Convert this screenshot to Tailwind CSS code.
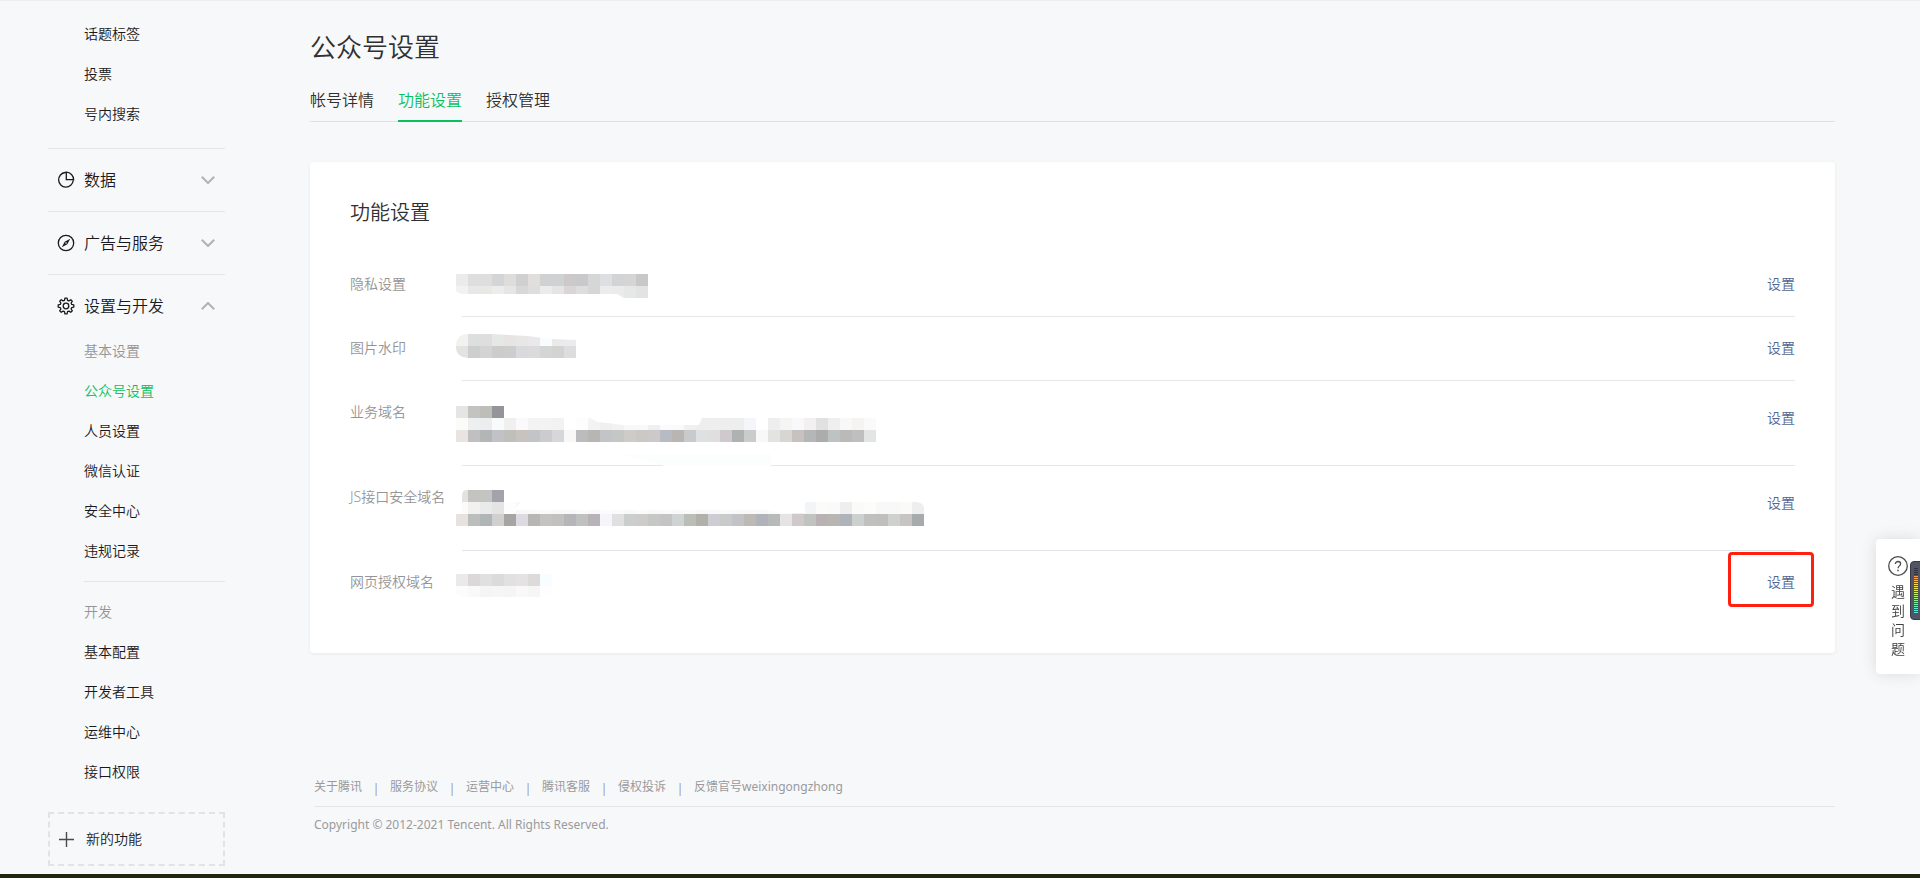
<!DOCTYPE html>
<html lang="zh-CN">
<head>
  <meta charset="UTF-8" />
  <meta name="viewport" content="width=device-width, initial-scale=1.0" />
  <title>公众号设置</title>
  <script src="https://cdn.jsdelivr.net/npm/@tailwindcss/browser@4"></script>
</head>
<body class="bg-[#f7f8fa] font-['Noto_Sans','Noto_Sans_CJK_SC',sans-serif] font-[350] text-sm text-[#1a1a1c]">
  <div class="min-h-screen flex flex-col border-t border-[#eceeef]">
    <div class="flex-1 flex">

      <!-- sidebar -->
      <nav class="ml-12 w-[177px] shrink-0 pt-[13px] pb-2">
        <ul class="pl-9 pb-3.5 leading-10">
          <li><a href="#">话题标签</a></li>
          <li><a href="#">投票</a></li>
          <li><a href="#">号内搜索</a></li>
        </ul>

        <button class="w-full h-[63px] flex items-center border-t border-[#e4e5e7] pl-2 pr-2.5 text-base">
          <svg class="w-5 h-5 mr-2" viewBox="0 0 20 20" fill="none" stroke="currentColor" stroke-width="1.3">
            <path d="M9.2 2.5A7.3 7.3 0 1 0 17.2 10.5" />
            <path d="M10.3 2.2V9.7H17.6A7.4 7.4 0 0 0 10.3 2.2Z" />
            <path d="M9.2 2.5H10.3M17.2 10.5L17.6 9.7" />
          </svg>
          <span class="flex-1 text-left">数据</span>
          <svg class="w-3.5 h-2" viewBox="0 0 14 8" fill="none" stroke="#b2b2b4" stroke-width="2"><path d="M.8 .8L7 7L13.2 .8" /></svg>
        </button>

        <button class="w-full h-[63px] flex items-center border-t border-[#e4e5e7] pl-2 pr-2.5 text-base">
          <svg class="w-5 h-5 mr-2" viewBox="0 0 20 20" fill="none" stroke="currentColor" stroke-width="1.3">
            <circle cx="10" cy="10" r="7.7" />
            <path d="M14.2 5.8L11.3 11.3L5.8 14.2L8.7 8.7Z" fill="currentColor" stroke="none" />
            <circle cx="10" cy="10" r=".8" fill="#f7f8fa" stroke="none" />
          </svg>
          <span class="flex-1 text-left">广告与服务</span>
          <svg class="w-3.5 h-2" viewBox="0 0 14 8" fill="none" stroke="#b2b2b4" stroke-width="2"><path d="M.8 .8L7 7L13.2 .8" /></svg>
        </button>

        <button class="w-full h-[63px] flex items-center border-t border-[#e4e5e7] pl-2 pr-2.5 text-base">
          <svg class="w-5 h-5 mr-2" viewBox="0 0 20 20" fill="none" stroke="currentColor" stroke-width="1.3" stroke-linejoin="round">
            <path id="gear" />
            <circle cx="10" cy="10" r="2.8" />
          </svg>
          <span class="flex-1 text-left">设置与开发</span>
          <svg class="w-3.5 h-2" viewBox="0 0 14 8" fill="none" stroke="#b2b2b4" stroke-width="2"><path d="M.8 7.2L7 1L13.2 7.2" /></svg>
        </button>

        <div class="pl-9 -mt-1.5 leading-10">
          <ul>
            <li class="text-[#959595]">基本设置</li>
            <li><a href="#" class="text-[#07c160]">公众号设置</a></li>
            <li><a href="#">人员设置</a></li>
            <li><a href="#">微信认证</a></li>
            <li><a href="#">安全中心</a></li>
            <li><a href="#">违规记录</a></li>
          </ul>
          <hr class="my-2.5 border-[#e4e5e7]" />
          <ul>
            <li class="text-[#959595]">开发</li>
            <li><a href="#">基本配置</a></li>
            <li><a href="#">开发者工具</a></li>
            <li><a href="#">运维中心</a></li>
            <li><a href="#">接口权限</a></li>
          </ul>
        </div>

        <button class="mt-5 w-full h-[54px] flex items-center gap-3 pl-[9px] border-2 border-dashed border-[#e1e3e4]">
          <svg class="w-[15px] h-[15px]" viewBox="0 0 15 15" stroke="#4a4a4c" stroke-width="1.4"><path d="M7.5 0V15M0 7.5H15" /></svg>
          新的功能
        </button>
      </nav>

      <main class="flex-1 min-w-0 mx-[85px] pt-[26px]">
        <h1 class="text-[26px] leading-10 text-[#303030]">公众号设置</h1>
        <ul class="mt-[21px] flex gap-6 border-b border-[#dfe1e2] text-base text-[#303030]">
          <li class="-mb-px border-b-2 border-transparent pb-2"><a href="#">帐号详情</a></li>
          <li class="-mb-px border-b-2 border-[#07c160] pb-2"><a href="#" class="text-[#07c160]">功能设置</a></li>
          <li class="-mb-px border-b-2 border-transparent pb-2"><a href="#">授权管理</a></li>
        </ul>

        <section class="mt-10 bg-white rounded-sm shadow-[0_1px_4px_rgba(0,0,0,0.06)] px-10 pt-[37px] pb-[38px]">
          <h2 class="text-xl text-[#303030]">功能设置</h2>
          <ul class="mt-[26px] leading-[22px] text-[#959595]">
            <li class="flex h-16">
              <span class="w-28 shrink-0 py-5">隐私设置</span>
              <div class="flex-1 flex justify-between border-b border-[#e6e7e8]">
                <svg class="mosaic -ml-1.5 w-[192px] h-12 overflow-visible" data-row="privacy"><clipPath id="clip-privacy"><path d="M0 21H192V45H168L161 41H8Q3 41 0 38Z" /></clipPath></svg>
                <a href="#" class="py-5 text-[#53678f]">设置</a>
              </div>
            </li>
            <li class="flex h-16">
              <span class="w-28 shrink-0 py-5">图片水印</span>
              <div class="flex-1 flex justify-between border-b border-[#e6e7e8]">
                <svg class="mosaic -ml-1.5 w-[120px] h-12 overflow-visible" data-row="watermark"><clipPath id="clip-watermark"><path d="M10 17H36L72 19L96 22L120 23V41H12Q0 40 0 30Q0 18 10 17Z" /></clipPath></svg>
                <a href="#" class="py-5 text-[#53678f]">设置</a>
              </div>
            </li>
            <li class="flex h-[85px]">
              <span class="w-28 shrink-0 py-5">业务域名</span>
              <div class="flex-1 flex justify-between border-b border-[#e6e7e8]">
                <svg class="mosaic -ml-1.5 w-[420px] h-20 overflow-visible" data-row="business">
                  <clipPath id="clip-business"><path d="M0 25H48V37H134L142 41L168 44H243L246 37H420V61H0Z" /></clipPath>
                  <path d="M162 73H315V85H209Z" fill="#fbfefd" />
                </svg>
                <a href="#" class="py-[26px] text-[#53678f]">设置</a>
              </div>
            </li>
            <li class="flex h-[85px]">
              <span class="w-28 shrink-0 py-5">JS接口安全域名</span>
              <div class="flex-1 flex justify-between border-b border-[#e1e5e9]">
                <svg class="mosaic -ml-1.5 w-[468px] h-20 overflow-visible" data-row="js"><clipPath id="clip-js"><path d="M10 24H48V36H65L60 42V44H310L326 47H350Q347 40 350 36H460Q468 37 468 42V60H0V48H6V30Q6 24 10 24Z" /></clipPath></svg>
                <a href="#" class="py-[26px] text-[#53678f]">设置</a>
              </div>
            </li>
            <li class="flex h-16">
              <span class="w-28 shrink-0 py-5">网页授权域名</span>
              <div class="flex-1 flex justify-between">
                <svg class="mosaic -ml-1.5 w-24 h-12 overflow-visible" data-row="oauth"><clipPath id="clip-oauth"><path d="M0 23H96V46H12Q4 46 0 43Z" /></clipPath></svg>
                <div class="relative">
                  <a href="#" class="block py-5 text-[#53678f]">设置</a>
                  <span class="absolute -left-[39px] -right-[19px] top-px h-[55px] border-3 border-[#ff2010] rounded-sm pointer-events-none"></span>
                </div>
              </div>
            </li>
          </ul>
        </section>

        <footer class="mt-[124px] pl-1 text-xs leading-5 text-[#9a9a9a] font-normal">
          <ul class="flex items-center pb-[9px] border-b border-[#e4e5e7]">
            <li><a href="#">关于腾讯</a></li>
            <li class="w-7 h-5 pt-0.5 text-center">|</li>
            <li><a href="#">服务协议</a></li>
            <li class="w-7 h-5 pt-0.5 text-center">|</li>
            <li><a href="#">运营中心</a></li>
            <li class="w-7 h-5 pt-0.5 text-center">|</li>
            <li><a href="#">腾讯客服</a></li>
            <li class="w-7 h-5 pt-0.5 text-center">|</li>
            <li><a href="#">侵权投诉</a></li>
            <li class="w-7 h-5 pt-0.5 text-center">|</li>
            <li><a href="#">反馈官号weixingongzhong</a></li>
          </ul>
          <p class="mt-2">Copyright © 2012-2021 Tencent. All Rights Reserved.</p>
        </footer>
      </main>
    </div>
    <div class="h-1 bg-[#1f2713]"></div>
  </div>

  <!-- floating help -->
  <button class="fixed right-0 top-[539px] w-11 h-[135px] flex flex-col items-center pt-[17px] bg-white rounded-l-sm shadow-[0_0_16px_rgba(0,0,0,0.12)] leading-[19px] text-[#404040]">
    <svg class="w-5 h-5 mb-1.5 shrink-0" viewBox="0 0 20 20" fill="none" stroke="#4c4c4c" stroke-width="1.3">
      <circle cx="10" cy="10" r="9.3" />
      <path d="M7.4 8.1C7.4 6.4 8.5 5.5 10 5.5S12.6 6.5 12.6 7.9C12.6 9.8 10 10 10 12.2" />
      <path d="M10 13.7V15.2" stroke-width="1.5" />
    </svg>
    <span class="w-3.5">遇到问题</span>
  </button>

  <!-- level meter at the screen edge -->
  <svg class="fixed right-0 top-[561px] w-2.5 h-[59px]" viewBox="0 0 10 59">
    <rect x=".5" y=".5" width="14" height="58" rx="3.5" fill="#505464" stroke="#363946" />
    <g id="meter"></g>
  </svg>

  <script>
    const NS = "http://www.w3.org/2000/svg";

    function rect(parent, x, y, w, h, fill) {
      const r = document.createElementNS(NS, "rect");
      r.setAttribute("x", x);
      r.setAttribute("y", y);
      r.setAttribute("width", w);
      r.setAttribute("height", h);
      r.setAttribute("fill", fill);
      parent.appendChild(r);
    }

    // 12px cells, one string per line, "-" leaves a cell empty
    const mosaics = {
      privacy: { top: 21, lines: [
        "ebebeb dedede dddedd d3d5d7 dfdddc d0d0d1 e0dfde d0d1d1 d0d1d2 cdc8c9 c9c9cb d5d6d6 dfdfe2 d3d4d5 d4d5d4 c8c8c8",
        "f2f2f2 e8e8e8 e9e8e5 ededf0 e6e6e6 d8d8da dedddf ececec e3e6e5 dad5d7 dededf d7d6d6 ececee ebebe9 e6e8e7 e3e3e3"
      ] },
      watermark: { top: 17, lines: [
        "f3f2f0 dcdfde dddedd e6e8e8 e7e5e4 e7e7e5 e9e9e9 f9fcfe e9ebeb ebebed",
        "e3e4e2 cdcfce d3d5d4 cdcccb cecdcd d9dadd dbdbdd d4d6d5 d4d3d2 dddde0"
      ] },
      business: { top: 25, lines: [
        "e6e5e3 c3c4c1 bfbdb8 949599",
        "fbfbf9 eeeff0 ebeeee f9fafa f0f0f1 fbf9fb f3f3f4 f3f3f4 f2f2f2 - fdfdfd f3f3f3 efefef f2f2f2 f8f8f8 f8f8f8 f0f0f2 fbfbfc fafafa f0f0f0 eeeeee eeeeee eeeeee eeeeef f5f6f9 - eeeeee f5f5f3 f9f9fb f2f0f1 e1e1e1 efefef f8f8f8 f6f4f3 fafafa",
        "e9e4e1 c0c0c1 b3b6b5 c1c2c7 bfbfbc c8c3bf c2c4c7 cccccf d6d7da f9f8f7 bcbcbe b8b6b4 c3c4c7 c5c7c6 cecbc9 cac9c6 cdc9cb b8bbc2 b8b5b3 c9cacc dfe0e2 e1dee0 cdc9cd aeb3b1 cacccb f8f8f8 e3e3e1 d7d6d3 c7c1c0 b5b6b8 acacac bdc3c3 babab8 bfbfbf e3e5e4"
      ] },
      js: { top: 24, lines: [
        "e2e2e0 c3c4c1 c4c4c1 a3a4a9",
        "fbfbf9 f2f1ef e9eaea e4e4e4 fdfdfd f8f8f8 f9f9f9 fafafa f9f9f9 f9f9f9 fbfbfb f9f9fa fcfcfc fafafa f9f9f9 fbfbfb f9f9f9 f9fafa f9f9f9 fafafa f8f8f8 f9f9f9 fafafa f9f9f9 f9f9f9 f9f9f9 fbfbfb fafafa f0f0f0 f2f4f5 fbfbf9 fafafa eeeeee fafaf8 fcfcfa f8f8f8 f7f8f7 fafbf9 eeeeee",
        "e7e2df bcbebd b0b5b5 d0d0d0 a6a5a4 dddbe1 b8b6b4 c4c3c1 c1c1bf b6b5b8 bfc1c0 b7b3b6 f5f6f9 e0e0e0 cccdcd cdcccb c6c8c7 c4c4c4 cfd3d3 bbbdb9 b1b0aa cecdd4 c9cbca c1c3c6 bdb9b4 b0b3ba b7bab9 e5e3e3 cfc9cc c1c3c0 b9b2b5 b8b6b3 afb4ba ccd0cf c0c0bc c0bfbb cfd1ce c6c5c2 a7abab e0e0df"
      ] },
      oauth: { top: 23, lines: [
        "ebe9ea dad8d9 e0e0e0 d9dcda e1e1e1 e5e2e3 dcdbda f8fdff",
        "fcfcfc f9f9f9 f5f5f5 f6f6f6 f5f5f5 f9f9f9 f6f6f6 fefefe"
      ] }
    };

    document.querySelectorAll(".mosaic").forEach((svg) => {
      const name = svg.dataset.row;
      const g = document.createElementNS(NS, "g");
      g.setAttribute("clip-path", `url(#clip-${name})`);
      mosaics[name].lines.forEach((line, j) => {
        line.split(" ").forEach((color, i) => {
          if (color !== "-") rect(g, i * 12, mosaics[name].top + j * 12, 12, 12, "#" + color);
        });
      });
      svg.appendChild(g);
    });

    // gear outline with eight teeth
    let d = "";
    for (let i = 0; i < 8; i++) {
      [[-15, 5.9], [-8, 7.9], [8, 7.9], [15, 5.9]].forEach(([off, r]) => {
        const a = (i * 45 + off) * Math.PI / 180;
        d += (d ? "L" : "M") + (10 + r * Math.sin(a)).toFixed(2) + " " + (10 - r * Math.cos(a)).toFixed(2);
      });
    }
    document.getElementById("gear").setAttribute("d", d + "Z");

    const meter = document.getElementById("meter");
    const levels = ["#30323b", "#30323b", "#30323b", "#30323b", "#ff9a5a", "#ffa852", "#ffb84c", "#ffc84a", "#ffd84a", "#fbe34c", "#f0e852", "#e2ec5a", "#d4ef62", "#c4f06a", "#b4f072", "#a4f07e", "#94f08c", "#84f09c", "#74f0ac", "#68eebc", "#5eeccc", "#58ead8", "#54e8e0"];
    levels.forEach((color, i) => rect(meter, 4, 7 + i * 2, 4, 1, color));
  </script>
</body>
</html>
